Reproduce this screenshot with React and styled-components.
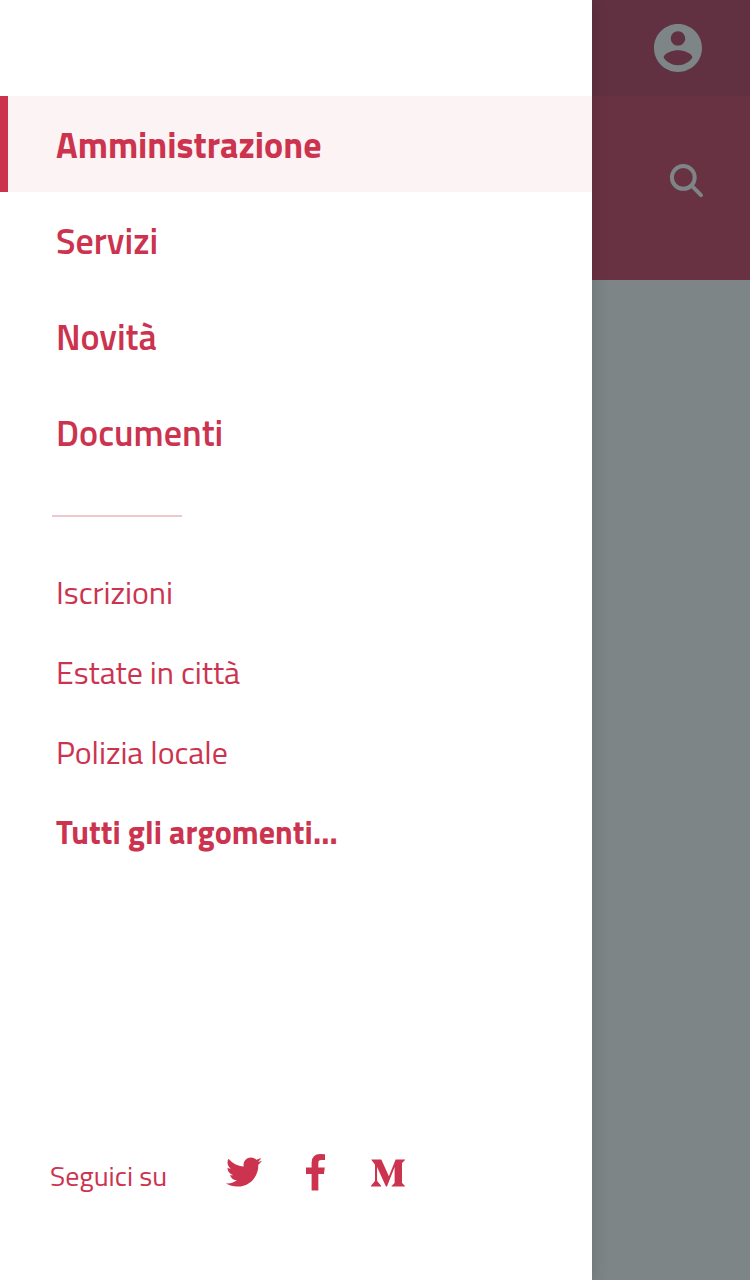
import React from "react";
import styled, { createGlobalStyle } from "styled-components";
import { FaTwitter, FaMediumM } from "react-icons/fa";

const GlobalStyle = createGlobalStyle`
  * { box-sizing: border-box; }
  body {
    margin: 0;
    background: #7d8587;
    font-family: "Titillium Web", Roboto, "Liberation Sans", sans-serif;
  }
`;

const Screen = styled.div`
  display: flex;
  width: 750px;
  height: 1280px;
  overflow: hidden;
`;

const Drawer = styled.aside`
  position: relative;
  display: flex;
  flex-direction: column;
  width: 592px;
  height: 100%;
  padding-top: 96px;
  background: #fff;
  color: #cc334f;
  box-shadow: 0 4px 16px rgba(0, 0, 0, 0.15);
`;

const Nav = styled.nav`
  display: flex;
  flex-direction: column;
`;

const NavItem = styled.a`
  display: flex;
  align-items: center;
  height: 96px;
  padding: 1px 0 0 ${(p) => (p.$active ? 48 : 56)}px;
  border-left: ${(p) => (p.$active ? "8px solid #cc334f" : "0")};
  background: ${(p) => (p.$active ? "#fcf3f4" : "transparent")};
  font-size: 36px;
  font-weight: ${(p) => (p.$active ? 700 : 600)};
`;

const Divider = styled.hr`
  width: 130px;
  height: 2px;
  margin: 35px 0 35px 52px;
  border: 0;
  background: #f0c7cf;
`;

const TopicItem = styled.a`
  display: flex;
  align-items: center;
  height: 80px;
  padding-left: 56px;
  font-size: 32px;
  font-weight: ${(p) => (p.$strong ? 700 : 400)};
  letter-spacing: ${(p) => (p.$strong ? 0.07 : -0.06)}px;
`;

const Social = styled.footer`
  display: flex;
  align-items: center;
  height: 44px;
  margin: auto 0 86px 50px;
`;

const SocialLabel = styled.span`
  width: 172px;
  padding-top: 6px;
  font-size: 28px;
  font-weight: 400;
`;

const SocialLinks = styled.div`
  display: flex;
  gap: 28px;
`;

const SocialLink = styled.a`
  display: flex;
  align-items: center;
  justify-content: center;
  width: 44px;
  height: 44px;
  padding: ${(p) => p.$inset || "0"};
  font-size: 36px;
`;

const Page = styled.main`
  flex: 1;
  background: #7d8587;
  color: #7d8587;
`;

const TopBar = styled.div`
  display: flex;
  align-items: center;
  height: 96px;
  padding-left: 62px;
  background: #613141;
`;

const Header = styled.header`
  display: flex;
  height: 184px;
  padding: 62px 0 0 72px;
  background: #693242;
`;

const links = ["Amministrazione", "Servizi", "Novità", "Documenti"];
const topics = ["Iscrizioni", "Estate in città", "Polizia locale", "Tutti gli argomenti..."];

const AccountIcon = () => (
  <svg width="48" height="48" viewBox="2 2 20 20" fill="currentColor">
    <path d="M12 2C6.48 2 2 6.48 2 12s4.48 10 10 10 10-4.48 10-10S17.52 2 12 2zm0 3c1.66 0 3 1.34 3 3s-1.34 3-3 3-3-1.34-3-3 1.34-3 3-3zm0 14.2c-2.5 0-4.71-1.28-6-3.22.03-1.99 4-3.08 6-3.08 1.99 0 5.97 1.09 6 3.08-1.29 1.94-3.5 3.22-6 3.22z" />
  </svg>
);

const SearchIcon = () => (
  <svg width="44" height="44" viewBox="0 0 44 44" fill="none" stroke="currentColor" strokeWidth="4" strokeLinecap="round">
    <circle cx="19.3" cy="19.4" r="11.4" />
    <path d="M27.6 27.7 37 37.1" />
  </svg>
);

const FacebookIcon = () => (
  <svg width="19" height="36.6" viewBox="95 0 864 1664" fill="currentColor">
    <path d="M959 12v264h-157q-86 0-116 36t-30 108v189h293l-39 296h-254v759h-306v-759h-255v-296h255v-218q0-186 104-288.500t277-102.500q147 0 228 12z" />
  </svg>
);

export default function App() {
  return (
    <>
      <GlobalStyle />
      <Screen>
        <Drawer>
          <Nav>
            {links.map((label, i) => (
              <NavItem key={label} $active={i === 0}>{label}</NavItem>
            ))}
          </Nav>
          <Divider />
          <Nav>
            {topics.map((label, i) => (
              <TopicItem key={label} $strong={i === 3}>{label}</TopicItem>
            ))}
          </Nav>
          <Social>
            <SocialLabel>Seguici su</SocialLabel>
            <SocialLinks>
              <SocialLink $inset="0.5px 0 0"><FaTwitter /></SocialLink>
              <SocialLink $inset="1px 2px 0 0"><FacebookIcon /></SocialLink>
              <SocialLink $inset="1px 0 0"><FaMediumM /></SocialLink>
            </SocialLinks>
          </Social>
        </Drawer>
        <Page>
          <TopBar><AccountIcon /></TopBar>
          <Header><SearchIcon /></Header>
        </Page>
      </Screen>
    </>
  );
}
